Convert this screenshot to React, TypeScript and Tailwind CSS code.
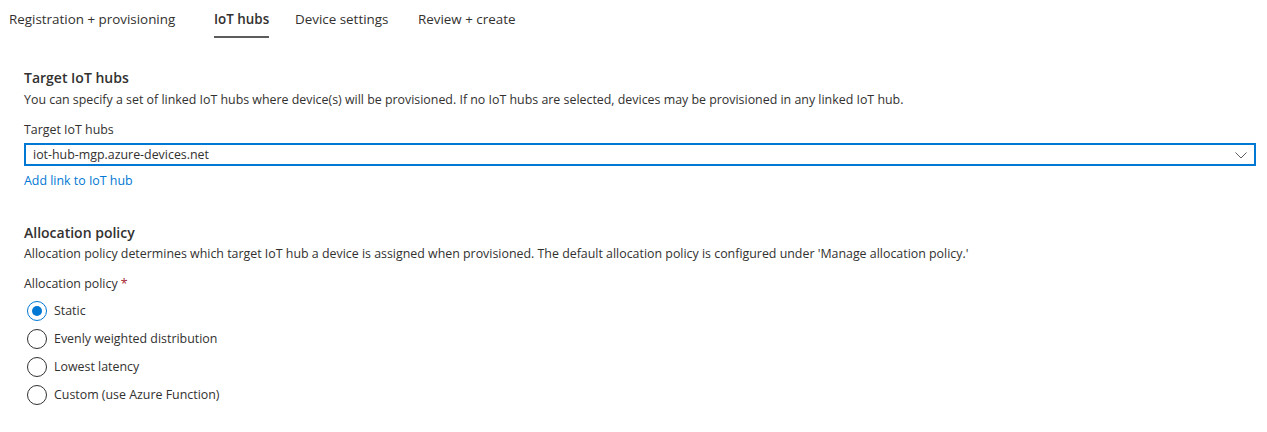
import React from "react";

const tabs = [
  { label: "Registration + provisioning", w: "w-[205px]", active: false },
  { label: "IoT hubs", w: "w-[81px]", active: true },
  { label: "Device settings", w: "w-[123px]", active: false },
  { label: "Review + create", w: "w-[120px]", active: false },
];

const options = [
  "Static",
  "Evenly weighted distribution",
  "Lowest latency",
  "Custom (use Azure Function)",
];

export default function App() {
  return (
    <div className="w-[1267px] h-[432px] bg-white text-[#323130] font-['Open_Sans',sans-serif] overflow-hidden">
      <div className="flex pl-[9px] h-[38px]">
        {tabs.map((t) => (
          <div key={t.label} className={`${t.w} flex flex-col items-start`}>
            <div className="flex flex-col">
              <span
                className={`pt-[9px] leading-[20px] text-[13.4px] whitespace-nowrap ${
                  t.active ? "font-semibold text-[#323130]" : "text-[#323130]"
                }`}
              >
                {t.label}
              </span>
              <div className={`mt-[7px] h-[2px] ${t.active ? "bg-[#5c5c5c]" : "bg-transparent"}`} />
            </div>
          </div>
        ))}
      </div>

      <div className="px-6 pt-[1px] flex flex-col">
        <h2 className="mt-[29px] text-[14px] leading-[20px] font-semibold">Target IoT hubs</h2>
        <p className="mt-[3px] text-[12.4px] leading-[18px]">
          You can specify a set of linked IoT hubs where device(s) will be provisioned. If no IoT hubs are selected, devices may be provisioned in any linked IoT hub.
        </p>
        <label className="mt-[12px] text-[12.4px] leading-[18px]">Target IoT hubs</label>
        <div className="mt-[4px] w-[1232px] h-[23px] border-2 border-[#0078d4] flex items-center justify-between pl-[7px] pr-[6px]">
          <span className="text-[12.4px] leading-[18px]">iot-hub-mgp.azure-devices.net</span>
          <svg width="14" height="14" viewBox="0 0 14 14" fill="none">
            <path d="M1.5 4.5 L7 10 L12.5 4.5" stroke="#605e5c" strokeWidth="1" />
          </svg>
        </div>
        <a className="mt-[6px] text-[12.4px] leading-[18px] text-[#0078d4] cursor-pointer w-fit">Add link to IoT hub</a>

        <h2 className="mt-[33px] text-[14px] leading-[20px] font-semibold">Allocation policy</h2>
        <p className="mt-[2px] text-[12.4px] leading-[18px]">
          Allocation policy determines which target IoT hub a device is assigned when provisioned. The default allocation policy is configured under 'Manage allocation policy.'
        </p>
        <label className="mt-[12px] text-[12.4px] leading-[18px]">
          Allocation policy <span className="text-[#a4262c]">*</span>
        </label>
        <div className="mt-[4px] flex flex-col">
          {options.map((o, i) => (
            <div key={o} className="h-[28px] flex items-center">
              <span
                className={`ml-[3px] w-[20px] h-[20px] rounded-full border flex items-center justify-center ${
                  i === 0 ? "border-[#0078d4]" : "border-[#323130]"
                }`}
              >
                {i === 0 && <span className="w-[10px] h-[10px] rounded-full bg-[#0078d4]" />}
              </span>
              <span className="ml-[7px] text-[12.4px] leading-[18px]">{o}</span>
            </div>
          ))}
        </div>
      </div>
    </div>
  );
}
